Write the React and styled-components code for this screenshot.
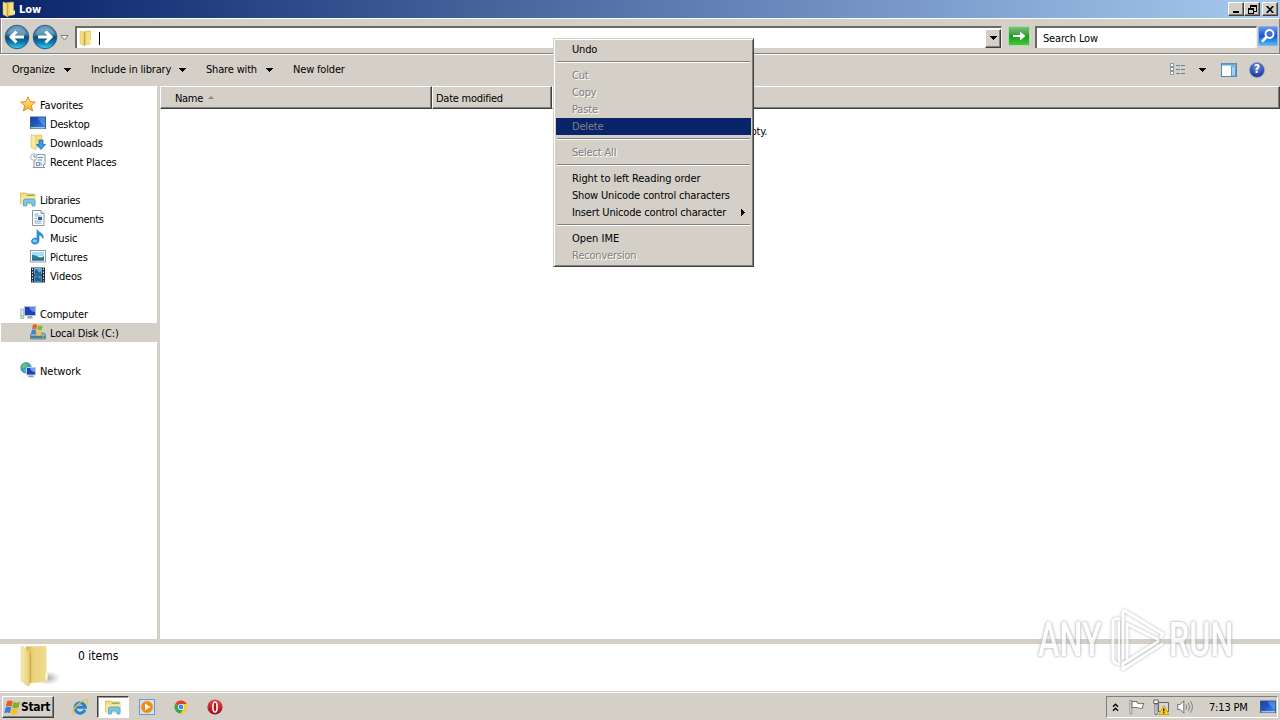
import React from 'react';
import styled, { createGlobalStyle, css } from 'styled-components';

const face = '#d4d0c8';
const navy = '#0a246a';

const Global = createGlobalStyle`
  * { box-sizing: border-box; }
  html, body { margin: 0; padding: 0; background: #fff; overflow: hidden; }
  body { font: 11px/13px "DejaVu Sans Condensed", "DejaVu Sans", Tahoma, sans-serif; color: #000; }
  svg { display: block; flex: none; }
`;

const raised = css`
  background: ${face};
  border: 1px solid;
  border-color: #fff #404040 #404040 #fff;
  box-shadow: inset -1px -1px 0 #808080;
`;

const Desktop = styled.div`
  display: flex;
  flex-direction: column;
  width: 1280px;
  height: 720px;
  position: relative;
  overflow: hidden;
  background: ${face};
`;

const Label = styled.span`
  white-space: nowrap;
  letter-spacing: ${(p) => p.$track ?? -0.17}px;
`;

const TitleBar = styled.header`
  display: flex;
  align-items: center;
  height: 18px;
  padding: 0 2px 0 1px;
  background: linear-gradient(90deg, ${navy}, #a6caf0);
`;

const Title = styled.span`
  flex: 1;
  padding-left: 2px;
  color: #fff;
  font-weight: bold;
  letter-spacing: -0.1px;
`;

const CaptionButton = styled.span`
  ${raised}
  display: flex;
  align-items: center;
  justify-content: center;
  width: 16px;
  height: 14px;
  margin-left: ${(p) => p.$gap || 0}px;
`;

const AddressBar = styled.div`
  display: flex;
  height: 36px;
  padding: 7px 1px 0 3px;
  border: 1px solid;
  border-color: #fff #808080 #808080 #808080;
  box-shadow: inset 1px 0 0 #fff, 0 1px 0 #fff;
  position: relative;
`;

const Nav = styled.div`
  display: flex;
  gap: 2px;
  margin-top: -2px;
`;

const NavDrop = styled.div`
  width: 17px;
  padding: 9px 0 0 2px;
`;

const Sunken = styled.div`
  display: flex;
  align-items: center;
  width: ${(p) => p.$w}px;
  height: 22px;
  margin-left: ${(p) => p.$ml || 0}px;
  padding-left: ${(p) => p.$pl || 0}px;
  background: #fff;
  border: solid;
  border-width: 2px 1px 0 2px;
  border-color: #6c6a66 #eeece6 #fff #6c6a66;
`;

const Caret = styled.span`
  flex: none;
  width: 1px;
  height: 13px;
  margin-left: 5px;
  background: #000;
`;

const DropButton = styled.span`
  ${raised}
  display: flex;
  align-items: center;
  justify-content: center;
  width: 16px;
  height: 19px;
  margin-left: auto;
`;

const Toolbar = styled.nav`
  display: flex;
  align-items: center;
  height: 31px;
  padding: 0 15px 2px 12px;
  margin-top: 1px;
`;

const ToolItem = styled.span`
  display: flex;
  align-items: center;
  width: ${(p) => p.$w}px;
`;

const ToolText = styled(Label)`
  width: ${(p) => p.$w}px;
`;

const ToolRight = styled.div`
  display: flex;
  align-items: center;
  margin-left: auto;
`;

const Spacer = styled.span`
  flex: none;
  width: ${(p) => p.$w}px;
`;

const Main = styled.div`
  display: flex;
  height: 553px;
`;

const Sidebar = styled.aside`
  width: 160px;
  padding: 9px 0 0 1px;
  background: #fff;
  border-right: 3px solid ${face};
`;

const Group = styled.div`
  margin-bottom: 19px;
`;

const Node = styled.div`
  display: flex;
  align-items: center;
  gap: 4px;
  height: 19px;
  padding-left: ${(p) => (p.$child ? 29 : 19)}px;
  background: ${(p) => (p.$on ? face : 'transparent')};

  ${Label} { padding-top: 2px; }
  svg { margin-bottom: 1px; }
`;

const Files = styled.section`
  flex: 1;
  background: #fff;
`;

const Columns = styled.div`
  display: flex;
  height: 23px;
`;

const Column = styled.div`
  display: flex;
  align-items: center;
  gap: 5px;
  width: ${(p) => p.$w}px;
  flex: ${(p) => (p.$w ? 'none' : 1)};
  padding: 2px 0 0 ${(p) => p.$pl || 0}px;
  background: ${face};
  border: 1px solid;
  border-color: #fff #404040 #404040 #fff;
  box-shadow: inset -1px -1px 0 #808080;
`;

const Empty = styled.div`
  padding-top: 16px;
  text-align: center;
`;

const Splitter = styled.div`
  height: 5px;
  background: ${face};
`;

const Details = styled.footer`
  display: flex;
  height: 48px;
  padding-left: 16px;
  background: #fff;
`;

const Count = styled.span`
  padding: 6px 0 0 16px;
  font-size: 12px;
`;

const Taskbar = styled.div`
  display: flex;
  align-items: flex-start;
  height: 28px;
  padding: 3px 2px 0 2px;
  background: ${face};
  border-top: 1px solid #fff;
  box-shadow: 0 -1px 0 ${face};
`;

const StartButton = styled.div`
  ${raised}
  display: flex;
  align-items: center;
  width: 52px;
  height: 22px;
  padding-left: 1px;
  font-weight: bold;
  font-size: 12px;
  letter-spacing: -0.3px;
`;

const Quick = styled.div`
  display: flex;
  align-items: center;
  justify-content: center;
  width: ${(p) => p.$w || 34}px;
  height: 22px;
`;

const ActiveTask = styled(Quick)`
  background: #fff;
  border: 1px solid;
  border-color: #404040 #fff #fff #404040;
  box-shadow: inset 1px 1px 0 #a09c94;
`;

const Tray = styled.div`
  display: flex;
  align-items: center;
  width: 172px;
  height: 22px;
  margin-left: auto;
  padding-left: 5px;
  border: 1px solid;
  border-color: #808080 #fff #fff #808080;
`;

const Menu = styled.div`
  position: absolute;
  left: 553px;
  top: 38px;
  width: 201px;
  height: 229px;
  padding: 2px;
  background: ${face};
  border: 1px solid;
  border-color: ${face} #404040 #404040 ${face};
  box-shadow: inset 1px 1px 0 #fff, inset -1px -1px 0 #808080;
`;

const MenuItem = styled.div`
  display: flex;
  align-items: center;
  justify-content: space-between;
  height: 17px;
  padding: 0 6px 1px 16px;
  color: ${(p) => (p.$off ? '#808080' : '#000')};
  text-shadow: ${(p) => (p.$off && !p.$on ? '1px 1px 0 #fff' : 'none')};
  background: ${(p) => (p.$on ? navy : 'transparent')};
`;

const Rule = styled.div`
  height: 2px;
  margin: 3px 1px 4px;
  border-top: 1px solid #808080;
  border-bottom: 1px solid #fff;
`;

const Watermark = styled.div`
  position: absolute;
  left: 1038px;
  top: 607px;
  display: flex;
  align-items: center;
  width: 196px;
  height: 66px;
  opacity: 0.75;
`;

const MarkWord = styled.span`
  flex: none;
  width: ${(p) => p.$w}px;
  font: 500 49px/68px Roboto, sans-serif;
  color: #fff;
  text-shadow: 0 0 4px #999, 0 0 3px #bbb;
  transform: scaleX(${(p) => p.$s});
  transform-origin: 0 50%;
  white-space: nowrap;
`;

const MarkShape = styled.svg`
  filter: drop-shadow(0 0 1.5px #999);
`;

const Down = ({ c = '#000' }) => (
  <svg width="7" height="4" shapeRendering="crispEdges"><path d="M0 0h7v1h-1v1h-1v1h-1v1h-1v-1h-1v-1h-1v-1h-1z" fill={c} /></svg>
);

const Folder = ({ s = 16 }) => (
  <svg width={s} height={s} viewBox="0 0 16 16">
    <path d="M6 1.5 12.500 1v13l-6.500 1z" fill="#ecd06a" stroke="#d2b24a" strokeWidth=".5" />
    <path d="M8.500 2h3.600v12H8.500z" fill="#f5e186" />
    <path d="M2 1l5 1.600V16L2 13.600z" fill="#f3dd88" stroke="#d8b954" strokeWidth=".5" />
    <path d="M6.300 2.600v13" stroke="#c29c30" strokeWidth="1" />
    <path d="M12.300 9.500h1.700V13.500h-1.700z" fill="#fffbe0" />
  </svg>
);

const BigFolder = () => (
  <svg width="46" height="46" viewBox="0 0 46 46">
    <defs>
      <linearGradient id="bf1"><stop stopColor="#f9ecb0" /><stop offset="1" stopColor="#e6cc70" /></linearGradient>
      <linearGradient id="bf2"><stop stopColor="#d2b04c" /><stop offset=".35" stopColor="#ecd37c" /><stop offset="1" stopColor="#f0dd92" /></linearGradient>
      <radialGradient id="bf3"><stop stopColor="#888" stopOpacity=".7" /><stop offset="1" stopColor="#999" stopOpacity="0" /></radialGradient>
    </defs>
    <ellipse cx="32" cy="34" rx="12" ry="7" fill="url(#bf3)" />
    <path d="M10 2.500 29 2c1.500 0 1.500 1 1.500 2v24l1 2v7l-3 1-15 1z" fill="url(#bf2)" />
    <path d="M5 2.500 7 2l7 7v30q0 3-2 3l-7-5z" fill="url(#bf1)" stroke="#dcc273" strokeWidth=".4" />
    <path d="M14.300 9v30" stroke="#c7a13c" />
    <path d="M29.500 28v8l2-1v-6z" fill="#fffbe8" />
  </svg>
);

const NavOrb = ({ flip }) => (
  <svg width="26" height="26" viewBox="0 0 26 26">
    <defs>
      <linearGradient id="orb" x2="0" y2="1">
        <stop stopColor="#6d9fbd" /><stop offset=".42" stopColor="#3b7ba4" /><stop offset=".5" stopColor="#0b4877" /><stop offset=".75" stopColor="#0c7fb8" /><stop offset="1" stopColor="#45d0ee" />
      </linearGradient>
    </defs>
    <circle cx="13" cy="13" r="12.400" fill="#a9bcc8" />
    <circle cx="13" cy="13" r="11.700" fill="url(#orb)" stroke="#1c4a70" strokeWidth=".8" />
    <path d="M3.500 10a10 8.500 0 0 1 19 0q-9 3-19 0z" fill="#fff" opacity=".18" />
    <g transform={flip ? 'translate(26 0) scale(-1 1)' : undefined}>
      <path d="M12.500 7.500 7 13l5.500 5.500M7.500 13H20" fill="none" stroke="#fff" strokeWidth="3" />
    </g>
  </svg>
);

const Go = () => (
  <svg width="22" height="20" viewBox="0 0 22 20">
    <defs><linearGradient id="go" x2="0" y2="1"><stop stopColor="#7cc47a" /><stop offset=".45" stopColor="#3a9c3c" /><stop offset=".5" stopColor="#169a1c" /><stop offset="1" stopColor="#44cc3c" /></linearGradient></defs>
    <rect x=".5" y=".5" width="21" height="19" rx="1" fill="url(#go)" stroke="#b4d8ae" />
    <path d="M5 9h7V5.500L17.500 10l-5.500 4.500V11H5z" fill="#fff" />
  </svg>
);

const SearchIcon = () => (
  <svg width="20" height="20" viewBox="0 0 20 20">
    <defs><linearGradient id="se" x2="0" y2="1"><stop stopColor="#6f9bec" /><stop offset=".5" stopColor="#1c52cf" /><stop offset="1" stopColor="#48c4f4" /></linearGradient></defs>
    <rect x=".5" y=".5" width="19" height="19" rx="1" fill="url(#se)" stroke="#83b0ea" />
    <circle cx="11.500" cy="8" r="4" fill="#3c6fe0" stroke="#fff" strokeWidth="1.900" />
    <path d="M8.500 11 4 15.500" stroke="#fff" strokeWidth="2.600" />
  </svg>
);

const Star = () => (
  <svg width="16" height="16" viewBox="0 0 16 16">
    <defs><linearGradient id="st" x2="0" y2="1"><stop stopColor="#fff2a0" /><stop offset="1" stopColor="#f9a91c" /></linearGradient></defs>
    <path d="M8 .8 10 5.700l5.400.3-4.200 3.600 1.500 5.400L8 12l-4.700 3 1.500-5.400L.6 6 6 5.700z" fill="url(#st)" stroke="#ee8a1c" />
  </svg>
);

const Monitor = () => (
  <svg width="16" height="16" viewBox="0 0 16 16">
    <defs><linearGradient id="mo" x2="1" y2="1"><stop stopColor="#1a3f9c" /><stop offset=".5" stopColor="#2458c4" /><stop offset="1" stopColor="#4b93e8" /></linearGradient></defs>
    <rect x=".5" y="2" width="15" height="11.500" fill="url(#mo)" stroke="#35599c" />
    <path d="M8 2.500h7v8q-5-2-7-8z" fill="#63a5ee" opacity=".6" />
    <path d="M1 12h4v1.500H1z" fill="#86dc86" />
    <path d="M5 12h10v1.500H5z" fill="#a4c6ee" />
  </svg>
);

const Downloads = () => (
  <svg width="16" height="16" viewBox="0 0 16 16">
    <path d="M5 1h7v12H5z" fill="#f3de82" stroke="#d6ba59" strokeWidth=".5" />
    <path d="M1 .8 6 2v13.500L1 13.500z" fill="#f8e9a5" stroke="#d6ba59" strokeWidth=".6" />
    <path d="M9 6h4v4.500h2.500L11 15.500 6.500 10.500H9z" fill="#3d9be6" stroke="#1a6cbc" strokeWidth=".8" />
  </svg>
);

const Recent = () => (
  <svg width="16" height="16" viewBox="0 0 16 16">
    <path d="M5 1.500h10v10h-1.500v3H4V8h1z" fill="#f2f5f8" stroke="#8b97a4" />
    <path d="M8 4.500h5M8 7h4M6.500 9.500h3v3h-3zM11 9.500v3" stroke="#6d90b4" fill="none" />
    <path d="M3 14.500h12" stroke="#8795a3" />
    <circle cx="3.800" cy="4" r="3.200" fill="#f8fafc" stroke="#a8b4c0" />
    <path d="M4 2v2h2" stroke="#567" fill="none" strokeWidth=".8" />
  </svg>
);

const Library = ({ s = 16 }) => (
  <svg width={s} height={s} viewBox="0 0 16 16">
    <path d="M.500 2h5.500l1 1h8V13H.500z" fill="#f2dc80" stroke="#cfae47" strokeWidth=".7" />
    <path d="M7 4.300h7" stroke="#5fb45a" />
    <path d="M.800 5.300h14.200V13H.800z" fill="#f9e89a" />
    <path d="M3.500 15V9.800q0-1.800 1.800-1.800h7.900Q15 8 15 9.800V15h-3v-3h-5.500v3z" fill="#7cc6ec" stroke="#3f97cc" strokeWidth=".7" />
  </svg>
);

const Documents = () => (
  <svg width="16" height="16" viewBox="0 0 16 16">
    <path d="M2.500.5h8.500l3 3v12H2.500z" fill="#fff" stroke="#8894a2" />
    <path d="M11 .5v3h3" fill="#dfe8f0" stroke="#8894a2" />
    <path d="M4.500 4h4M4.500 6h7M4.500 8.500h2.500M4.500 11h7M4.500 13h7" stroke="#7fa6cc" />
    <rect x="8" y="7" width="4" height="3" fill="#2f5f9c" />
  </svg>
);

const Music = () => (
  <svg width="16" height="16" viewBox="0 0 16 16">
    <path d="M7 .5C8 3.500 14.500 4 13 9.500 12 7 10.500 6.200 9 6v5.500C9 16.500.8 16 1.500 12c.4-2.500 3-3.400 5.500-2.600z" fill="#2f93dc" stroke="#1f76bd" strokeWidth=".6" />
    <ellipse cx="4.800" cy="12" rx="2.200" ry="1.400" fill="#8bcdf6" />
  </svg>
);

const Pictures = () => (
  <svg width="16" height="16" viewBox="0 0 16 16">
    <rect x=".5" y="2.500" width="15" height="11.500" fill="#fff" stroke="#8e9aa6" />
    <path d="M2 4h12v4H2z" fill="#a5dcf7" />
    <path d="M2 7q3-.5 6 1.500t6-.5v4.500H2z" fill="#2f7f86" />
    <path d="M2 10.500h12v2H2z" fill="#2869a8" />
  </svg>
);

const Videos = () => (
  <svg width="16" height="16" viewBox="0 0 16 16">
    <path d="M1 .5h14v15H1z" fill="#222b36" />
    <path d="M4 1h8v6.500H4z" fill="#5fb0e4" /><path d="M4 8.500h8V15H4z" fill="#3d8fd0" />
    <path d="M5 3q2-2 3 1t3 0v3H5zM5 11q3-3 6 1v2H5z" fill="#245f8c" />
    <path d="M7.500 2h2v2zM8 10h2v1.500z" fill="#d87c50" />
    <path d="M2.500 1.500v13M13.500 1.500v13" stroke="#e8eef4" strokeDasharray="1.500 1.500" />
  </svg>
);

const Computer = () => (
  <svg width="16" height="16" viewBox="0 0 16 16">
    <path d="M.8 4h3v9.500h-3z" fill="#dfe5ea" stroke="#8c98a4" strokeWidth=".7" />
    <path d="M1 11h2" stroke="#5fc04a" />
    <path d="M4.500 1.500h11v9h-11z" fill="#1d3fb8" stroke="#b4c0d0" />
    <path d="M9 2h6v5q-4 0-6-5z" fill="#5e8fee" />
    <path d="M8 11h4l1 2.500H7z" fill="#98a6b6" />
  </svg>
);

const Flag = ({ s = 17 }) => (
  <svg width={s} height={s} viewBox="0 0 16 16">
    <path d="M3 2.200q2.500-1.700 5.200 0L7 7.300q-2.500-1.500-5.300 0z" fill="#ee5a24" />
    <path d="M8.900 2.700q2.700 1.500 6.100 0L13.700 7.900q-2.900 1.400-6 0z" fill="#76b82a" />
    <path d="M1.500 8.200q2.700-1.600 5.300 0L5.500 13.400q-2.500-1.500-5.300 0z" fill="#3284d8" />
    <path d="M7.500 8.700q2.900 1.500 5.900 0L12.100 14q-2.900 1.400-5.900 0z" fill="#fbc21b" />
  </svg>
);

const Disk = () => (
  <svg width="16" height="16" viewBox="0 0 16 16">
    <path d="M.500 10.500 2 9h12l1.500 1.500V15H.500z" fill="#8fb0c4" stroke="#55788f" strokeWidth=".8" />
    <path d="M1 13h14" stroke="#3b6a86" strokeWidth="1.500" /><path d="M12 13h2" stroke="#7fe04a" />
    <path d="M2.800.8q2.200-1.200 4.400 0l-.8 4.600q-2-1.200-4.400 0z" fill="#e8602c" />
    <path d="M8 1.200q2.200 1.200 4.800 0l-.9 4.400q-2.200 1.200-4.700 0z" fill="#7fb93a" />
    <path d="M1.800 6q2.200-1.200 4.400 0l-.8 4.600q-2-1.200-4.400 0z" fill="#3d86d8" />
    <path d="M7 6.400q2.200 1.200 4.800 0l-.9 4.400q-2.200 1.200-4.700 0z" fill="#fac632" />
  </svg>
);

const Network = () => (
  <svg width="16" height="16" viewBox="0 0 16 16">
    <circle cx="6" cy="5.800" r="5.300" fill="#3ba0d8" stroke="#2372a8" strokeWidth=".6" />
    <path d="M2.500 2.500q3-2.500 5 0L5 5.500 1.500 6zM4 8l3-1 1 3-2 1z" fill="#6cc45e" />
    <path d="M6.500 5.500h9v7.500h-9z" fill="#1c3fc0" stroke="#c4cedc" />
    <path d="M10 6h5v4q-4 0-5-4z" fill="#6e9df0" />
    <path d="M9 13.500h4l1 1.700H8z" fill="#8b9aac" />
  </svg>
);

const Views = () => (
  <svg width="16" height="13" viewBox="0 0 16 13" shapeRendering="crispEdges">
    {[0, 4, 8].map((y) => (
      <g key={y}>
        <rect x=".5" y={y + 0.5} width="3" height="3" fill="#fff" stroke="#8c98a4" />
        <path d={`M6 ${y + 2.5}h4M11 ${y + 2.5}h4`} stroke="#6f7f92" />
      </g>
    ))}
  </svg>
);

const Pane = () => (
  <svg width="16" height="14" viewBox="0 0 16 14">
    <rect x=".5" y=".5" width="15" height="13" fill="#fff" stroke="#4d8ab0" />
    <path d="M1 1.500h14" stroke="#5ca6ce" strokeWidth="2" />
    <path d="M10.500 3h4v10h-4z" fill="#9fd0ee" stroke="#5b9cc4" />
  </svg>
);

const HelpBadge = styled.span`
  display: flex;
  align-items: center;
  justify-content: center;
  width: 16px;
  height: 16px;
  border-radius: 50%;
  border: 1px solid #8c9ccc;
  background: radial-gradient(circle at 50% 30%, #6f8fe0, #1c3c9c 75%);
  color: #fff;
  font-weight: bold;
  font-size: 12px;
`;

const IE = () => (
  <svg width="18" height="18" viewBox="0 0 18 18">
    <path d="M14 11.800A5.200 5.200 0 1 1 14.300 9.300H5.500" fill="none" stroke="#2583d6" strokeWidth="3" />
    <path d="M2.500 16C-.5 14 7 4 14.500 1.800c3-.8 2.500 2.200.8 4.700" fill="none" stroke="#ecc23a" strokeWidth="1.400" />
  </svg>
);

const Player = () => (
  <svg width="16" height="16" viewBox="0 0 16 16">
    <rect x=".5" y=".5" width="15" height="15" fill="#cfe4f6" stroke="#5f9fd8" />
    <circle cx="8" cy="8" r="6" fill="#f58a12" stroke="#fbb657" strokeWidth=".6" />
    <path d="M6 4.500 11.500 8 6 11.500z" fill="#fff" />
  </svg>
);

const Chrome = () => (
  <svg width="14" height="14" viewBox="0 0 14 14">
    <circle cx="7" cy="7" r="6.500" fill="#f7cb2d" />
    <path d="M7 7 1.400 3.700A6.500 6.500 0 0 1 12.700 4H7z" fill="#e2402f" />
    <path d="M7 7 1.400 3.700A6.500 6.500 0 0 0 6.500 13.500L9.500 8.500z" fill="#3aa552" />
    <circle cx="7" cy="7" r="3.100" fill="#fff" /><circle cx="7" cy="7" r="2.400" fill="#4286f0" />
  </svg>
);

const Opera = () => (
  <svg width="16" height="16" viewBox="0 0 16 16">
    <defs><linearGradient id="op" x2="0" y2="1"><stop stopColor="#e8484c" /><stop offset="1" stopColor="#a00812" /></linearGradient></defs>
    <circle cx="8" cy="8" r="7.600" fill="url(#op)" />
    <ellipse cx="8" cy="8" rx="2.100" ry="5" fill="#b3141c" stroke="#fff" strokeWidth="1.600" />
  </svg>
);

const Chevrons = () => (
  <svg width="7" height="9" viewBox="0 0 7 9"><path d="M1 3.800 3.500 1.300 6 3.800M1 7.800l2.500-2.500L6 7.800" fill="none" stroke="#000" strokeWidth="1.400" /></svg>
);

const ActionFlag = () => (
  <svg width="16" height="16" viewBox="0 0 16 16">
    <path d="M1 1.500h1.800v13.500H1z" fill="#fff" stroke="#777" strokeWidth=".8" />
    <path d="M3 2.500h5v1.500q3 1 7 .5-2.500 2.500-1 4.500-4 1-6-.5H3z" fill="#fff" stroke="#666" strokeWidth=".9" />
  </svg>
);

const NetAlert = () => (
  <svg width="16" height="16" viewBox="0 0 16 16">
    <path d="M5.500 3.500h10v9h-10z" fill="#d5d5d5" stroke="#666" />
    <path d="M.8 1v3.500h4.400V1z" fill="#fff" stroke="#555" strokeWidth=".9" />
    <path d="M2 5h2v10.500H2z" fill="#fff" stroke="#555" strokeWidth=".8" />
    <path d="m10.800 6.500 5 9H5.800z" fill="#ffd21e" stroke="#c49a00" strokeWidth=".8" />
    <path d="M10.800 9.500v3M10.800 13.300v1.200" stroke="#000" strokeWidth="1.200" />
  </svg>
);

const Speaker = () => (
  <svg width="17" height="14" viewBox="0 0 17 14">
    <path d="M.7 4.500h2.500L6.800.8v12.400L3.200 9.500H.7z" fill="#fff" stroke="#666" strokeWidth=".9" />
    <path d="M9 4.500q1.600 2.500 0 5M11.300 2.800q2.800 4.200 0 8.400M13.500 1.200q3.800 5.800 0 11.600" fill="none" stroke="#777" strokeWidth=".9" />
  </svg>
);

const MarkLogo = () => (
  <MarkShape width="62" height="66" viewBox="0 0 62 66">
    <g fill="none" stroke="#fff" strokeWidth="3" strokeLinejoin="round" strokeLinecap="round">
      <path d="M16 51V5q0-2 2-1l38 23-2 3" />
      <path d="M20 51V17l31 15.500" />
      <path d="M12 12Q6 11 6 15v37q0 4 6 5" />
      <path d="M12 15v39" strokeWidth="2" />
      <path d="M17 56l34-21.500M16 62l39-25" />
      <path d="M16 56v6" />
    </g>
  </MarkShape>
);

const tree = [
  [[Star, 'Favorites'], [Monitor, 'Desktop'], [Downloads, 'Downloads'], [Recent, 'Recent Places']],
  [[Library, 'Libraries', -0.3], [Documents, 'Documents', -0.3], [Music, 'Music'], [Pictures, 'Pictures'], [Videos, 'Videos']],
  [[Computer, 'Computer'], [Disk, 'Local Disk (C:)', -0.17, true]],
  [[Network, 'Network', -0.05]],
];

const menu = [
  { t: 'Undo' }, null,
  { t: 'Cut', off: true }, { t: 'Copy', off: true }, { t: 'Paste', off: true }, { t: 'Delete', off: true, on: true }, null,
  { t: 'Select All', off: true }, null,
  { t: 'Right to left Reading order', track: -0.1 }, { t: 'Show Unicode control characters' }, { t: 'Insert Unicode control character', sub: true }, null,
  { t: 'Open IME', track: -0.02 }, { t: 'Reconversion', off: true },
];

export default function App() {
  return (
    <Desktop>
      <Global />
      <TitleBar>
        <Folder />
        <Title>Low</Title>
        <CaptionButton><svg width="8" height="8" shapeRendering="crispEdges"><path d="M1 6h6v2H1z" /></svg></CaptionButton>
        <CaptionButton><svg width="9" height="9" shapeRendering="crispEdges"><path d="M2.500 0v3M2 .500h6.500M2 1.500h6.500M8.500 0v6.500H6M.500 3v5.500h5V3M0 3.500h6M0 4.500h6" fill="none" stroke="#000" /></svg></CaptionButton>
        <CaptionButton $gap={2}><svg width="8" height="7"><path d="m.7 0 6.600 7M7.300 0 .7 7" stroke="#000" strokeWidth="1.700" /></svg></CaptionButton>
      </TitleBar>
      <AddressBar>
        <Nav><NavOrb /><NavOrb flip /></Nav>
        <NavDrop><svg width="9" height="6"><path d="M.8.5h7.400L4.500 5z" fill="#eee" stroke="#777" strokeWidth=".9" /></svg></NavDrop>
        <Sunken $w={927} $pl={1}><Folder /><Caret /><DropButton><Down /></DropButton></Sunken>
        <Spacer $w={6} />
        <Go />
        <Sunken $w={222} $ml={5} $pl={6}><Label>Search Low</Label></Sunken>
        <Spacer $w={1} />
        <SearchIcon />
      </AddressBar>
      <Toolbar>
        <ToolItem $w={79}><ToolText $w={52}>Organize</ToolText><Down /></ToolItem>
        <ToolItem $w={115}><ToolText $w={88}>Include in library</ToolText><Down /></ToolItem>
        <ToolItem $w={87}><ToolText $w={60}>Share with</ToolText><Down /></ToolItem>
        <Label>New folder</Label>
        <ToolRight>
          <Views /><Spacer $w={13} /><Down /><Spacer $w={15} /><Pane /><Spacer $w={12} /><HelpBadge>?</HelpBadge>
        </ToolRight>
      </Toolbar>
      <Main>
        <Sidebar>
          {tree.map((g, i) => (
            <Group key={i}>
              {g.map(([Icon, name, track, on], j) => (
                <Node key={name} $child={j > 0} $on={on}><Icon /><Label $track={track}>{name}</Label></Node>
              ))}
            </Group>
          ))}
        </Sidebar>
        <Files>
          <Columns>
            <Column $w={272} $pl={14}><Label $track={-0.3}>Name</Label><svg width="6" height="7"><path d="M0 4 3 1l3 3z" fill="#888" /></svg></Column>
            <Column $w={120} $pl={3}><Label $track={-0.25}>Date modified</Label></Column>
            <Column />
          </Columns>
          <Empty><Label $track={-0.25}>This folder is empty.</Label></Empty>
        </Files>
      </Main>
      <Splitter />
      <Details><BigFolder /><Count>0 items</Count></Details>
      <Taskbar>
        <StartButton><Flag />Start</StartButton>
        <Spacer $w={9} />
        <Quick><IE /></Quick>
        <ActiveTask $w={32}><Library /></ActiveTask>
        <Spacer $w={1} />
        <Quick><Player /></Quick>
        <Quick><Chrome /></Quick>
        <Quick><Opera /></Quick>
        <Tray>
          <Chevrons /><Spacer $w={10} /><ActionFlag /><Spacer $w={8} /><NetAlert /><Spacer $w={8} /><Speaker />
          <Spacer $w={15} /><Label>7:13 PM</Label><Spacer $w={12} /><Monitor />
        </Tray>
      </Taskbar>
      <Menu>
        {menu.map((m, i) => (m ? (
          <MenuItem key={m.t} $off={m.off} $on={m.on}>
            <Label $track={m.track}>{m.t}</Label>
            {m.sub && <svg width="4" height="7" shapeRendering="crispEdges"><path d="M0 0h1v1h1v1h1v1h1v1h-1v1h-1v1h-1v1h-1z" /></svg>}
          </MenuItem>
        ) : <Rule key={i} />))}
      </Menu>
      <Watermark>
        <MarkWord $w={69} $s={0.66}>ANY</MarkWord>
        <MarkLogo />
        <MarkWord $w={64} $s={0.66}>RUN</MarkWord>
      </Watermark>
    </Desktop>
  );
}
